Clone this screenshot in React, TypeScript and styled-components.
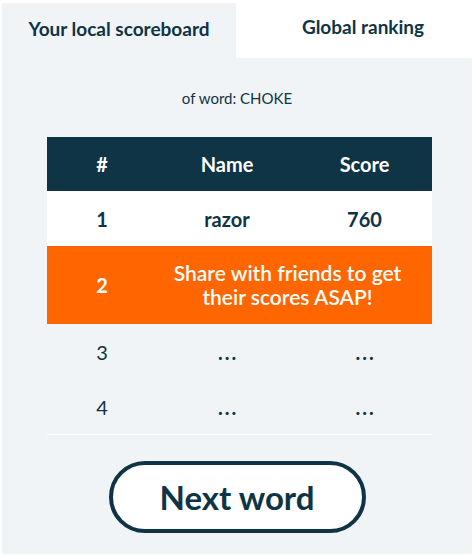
import styled, { createGlobalStyle } from 'styled-components';

const GlobalStyle = createGlobalStyle`
  html, body {
    margin: 0;
    padding: 0;
    background: #ffffff;
  }
  body {
    font-family: 'Lato', 'DejaVu Sans', sans-serif;
    color: #0e3445;
  }
`;

const Page = styled.div`
  width: 470px;
  margin: 0 2px;
  display: flex;
  flex-direction: column;
`;

const Tabs = styled.div`
  display: flex;
  height: 58px;
`;

const Tab = styled.div<{ $active?: boolean }>`
  flex: 0 0 ${(p) => (p.$active ? '234px' : '236px')};
  margin-top: ${(p) => (p.$active ? '3px' : '0')};
  padding-left: ${(p) => (p.$active ? '0' : '18px')};
  box-sizing: border-box;
  background: ${(p) => (p.$active ? '#f1f4f6' : '#ffffff')};
  display: flex;
  align-items: center;
  justify-content: center;
  padding-bottom: ${(p) => (p.$active ? '4px' : '6px')};
  font-size: 19px;
  font-weight: 700;
`;

const Panel = styled.div`
  background: #f1f4f6;
  height: 496px;
  display: flex;
  flex-direction: column;
  align-items: center;
`;

const Subtitle = styled.div`
  margin-top: 31px;
  font-size: 15px;
  line-height: 18px;
`;

const Table = styled.div`
  margin-top: 30px;
  align-self: flex-start;
  margin-left: 45px;
  width: 385px;
  display: flex;
  flex-direction: column;
  border-bottom: 1px solid #ffffff;
`;

const Row = styled.div<{ $bg?: string; $color?: string; $h: number; $bold?: boolean }>`
  display: grid;
  grid-template-columns: 110px 140px 1fr;
  align-items: center;
  height: ${(p) => p.$h}px;
  background: ${(p) => p.$bg || 'transparent'};
  color: ${(p) => p.$color || '#0e3445'};
  font-size: 20px;
  font-weight: ${(p) => (p.$bold ? 700 : 400)};
`;

const Cell = styled.div`
  text-align: center;
`;

const Dots = styled(Cell)`
  letter-spacing: 2px;
  padding-left: 2px;
  font-weight: 700;
`;

const Message = styled.div`
  grid-column: 2 / 4;
  text-align: center;
  padding-right: 14px;
  font-size: 21px;
  line-height: 24px;
  font-weight: 600;
`;

const ButtonWrap = styled.div`
  margin-top: 26px;
  display: flex;
  justify-content: center;
`;

const NextButton = styled.button`
  width: 257px;
  height: 72px;
  box-sizing: border-box;
  border: 4px solid #0e3445;
  border-radius: 36px;
  background: #ffffff;
  color: #0e3445;
  font-family: 'Lato', 'DejaVu Sans', sans-serif;
  font-size: 33px;
  font-weight: 700;
  cursor: pointer;
`;

export default function App() {
  return (
    <>
      <GlobalStyle />
      <Page>
        <Tabs>
          <Tab $active>Your local scoreboard</Tab>
          <Tab>Global ranking</Tab>
        </Tabs>
        <Panel>
          <Subtitle>of word: CHOKE</Subtitle>
          <Table>
            <Row $h={54} $bg="#0e3445" $color="#ffffff" $bold>
              <Cell>#</Cell>
              <Cell>Name</Cell>
              <Cell>Score</Cell>
            </Row>
            <Row $h={55} $bg="#ffffff" $bold>
              <Cell>1</Cell>
              <Cell>razor</Cell>
              <Cell>760</Cell>
            </Row>
            <Row $h={78} $bg="#ff6600" $color="#ffffff" $bold>
              <Cell>2</Cell>
              <Message>
                Share with friends to get
                <br />
                their scores ASAP!
              </Message>
            </Row>
            <Row $h={55}>
              <Cell>3</Cell>
              <Dots>...</Dots>
              <Dots>...</Dots>
            </Row>
            <Row $h={55}>
              <Cell>4</Cell>
              <Dots>...</Dots>
              <Dots>...</Dots>
            </Row>
          </Table>
          <ButtonWrap>
            <NextButton>Next word</NextButton>
          </ButtonWrap>
        </Panel>
      </Page>
    </>
  );
}
